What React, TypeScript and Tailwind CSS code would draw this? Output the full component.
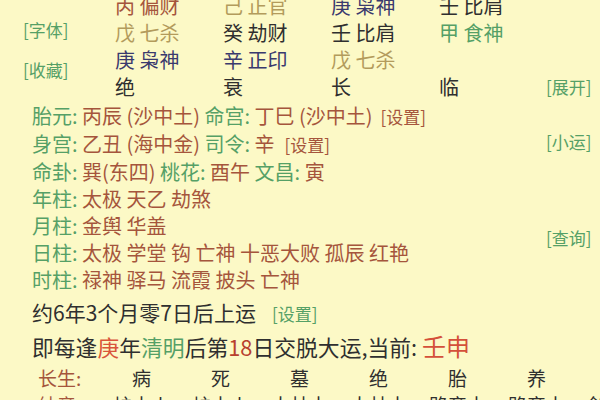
const font = { fontFamily: '"Noto Sans CJK SC", "Noto Sans", sans-serif' };

type Cell = { text: string; color: string };

const BROWN = "text-[#a5553c]";
const TAN = "text-[#b39b5c]";
const NAVY = "text-[#3a3a6e]";
const DARK = "text-[#2f2f2f]";
const GREEN = "text-[#55a066]";

const pillars: Cell[][] = [
  [
    { text: "丙 偏财", color: BROWN },
    { text: "己 正官", color: TAN },
    { text: "庚 枭神", color: NAVY },
    { text: "壬 比肩", color: DARK },
  ],
  [
    { text: "戊 七杀", color: TAN },
    { text: "癸 劫财", color: DARK },
    { text: "壬 比肩", color: DARK },
    { text: "甲 食神", color: GREEN },
  ],
  [
    { text: "庚 枭神", color: NAVY },
    { text: "辛 正印", color: NAVY },
    { text: "戊 七杀", color: TAN },
    { text: "", color: DARK },
  ],
  [
    { text: "绝", color: DARK },
    { text: "衰", color: DARK },
    { text: "长", color: DARK },
    { text: "临", color: DARK },
  ],
];

const shensha: [string, string][] = [
  ["年柱", "太极 天乙 劫煞"],
  ["月柱", "金舆 华盖"],
  ["日柱", "太极 学堂 钩 亡神 十恶大败 孤辰 红艳"],
  ["时柱", "禄神 驿马 流霞 披头 亡神"],
];

const changsheng = ["病", "死", "墓", "绝", "胎", "养"];
const nayin = ["炉中火", "炉中火", "大林木", "大林木", "路旁土", "路旁土", "剑锋金"];

function Link({ children, className = "" }: { children: React.ReactNode; className?: string }) {
  return <div className={`text-[17px] leading-[27px] ${GREEN} ${className}`}>[{children}]</div>;
}

function Label({ children }: { children: React.ReactNode }) {
  return <span className={GREEN}>{children}: </span>;
}

export default function App() {
  return (
    <div className="w-[600px] h-[400px] overflow-hidden bg-[#fcf9c6]" style={font}>
      <div className="flex -mt-[8px]">
        <div className="w-[546px] shrink-0">
          {/* four pillars */}
          <div className="flex">
            <div className="w-[115px] shrink-0 pl-[23px]">
              <Link className="mt-[24px]">字体</Link>
              <Link className="mt-[13px]">收藏</Link>
            </div>
            <div className="grid grid-cols-[108px_108px_108px_108px] text-[20px] leading-[27px] whitespace-nowrap">
              {pillars.flat().map((c, i) => (
                <div key={i} className={`h-[27px] ${c.color}`}>
                  {c.text}
                </div>
              ))}
            </div>
          </div>

          <div className="pl-[32px] mt-[2px] text-[20px] leading-[27px] whitespace-nowrap">
            <div className={BROWN}>
              <Label>胎元</Label>丙辰 (沙中土) <Label>命宫</Label>丁巳 (沙中土)
              <span className="text-[17px] ml-[8px]">[设置]</span>
            </div>
            <div className={BROWN}>
              <Label>身宫</Label>乙丑 (海中金) <Label>司令</Label>辛
              <span className="text-[17px] ml-[10px]">[设置]</span>
            </div>
            <div className={BROWN}>
              <Label>命卦</Label>巽(东四) <Label>桃花</Label>酉午 <Label>文昌</Label>寅
            </div>
            {shensha.map(([k, v]) => (
              <div key={k} className={BROWN}>
                <Label>{k}</Label>
                {v}
              </div>
            ))}
          </div>

          <div className="pl-[32px] mt-[3px] whitespace-nowrap">
            <div className={`h-[33px] leading-[33px] text-[21px] ${DARK}`}>
              约6年3个月零7日后上运<span className={`text-[17px] ml-[16px] ${GREEN}`}>[设置]</span>
            </div>
            <div className={`h-[34px] leading-[34px] text-[21.8px] ${DARK}`}>
              即每逢<span className="text-[#d9553a]">庚</span>年
              <span className={GREEN}>清明</span>后第<span className="text-[#b8402e]">18</span>
              日交脱大运,当前: <span className="text-[24px] text-[#d4503a]">壬申</span>
            </div>
          </div>
        </div>

        <div className="w-[54px] shrink-0">
          <Link className="mt-[81px]">展开</Link>
          <Link className="mt-[28px]">小运</Link>
          <Link className="mt-[69px]">查询</Link>
        </div>
      </div>

      <div className="pl-[38px] -mt-[1px] text-[19px] whitespace-nowrap">
        <div className="flex h-[33px] items-center">
          <div className={`w-[64px] shrink-0 ${BROWN}`}>长生:</div>
          {changsheng.map((c, i) => (
            <div key={i} className={`w-[79px] shrink-0 text-center ${DARK}`}>
              {c}
            </div>
          ))}
        </div>
        <div className="flex leading-[20px]">
          <div className={`w-[64px] shrink-0 ${BROWN}`}>纳音:</div>
          {nayin.map((c, i) => (
            <div key={i} className={`w-[79px] shrink-0 text-center ${DARK}`}>
              {c}
            </div>
          ))}
        </div>
      </div>
    </div>
  );
}
